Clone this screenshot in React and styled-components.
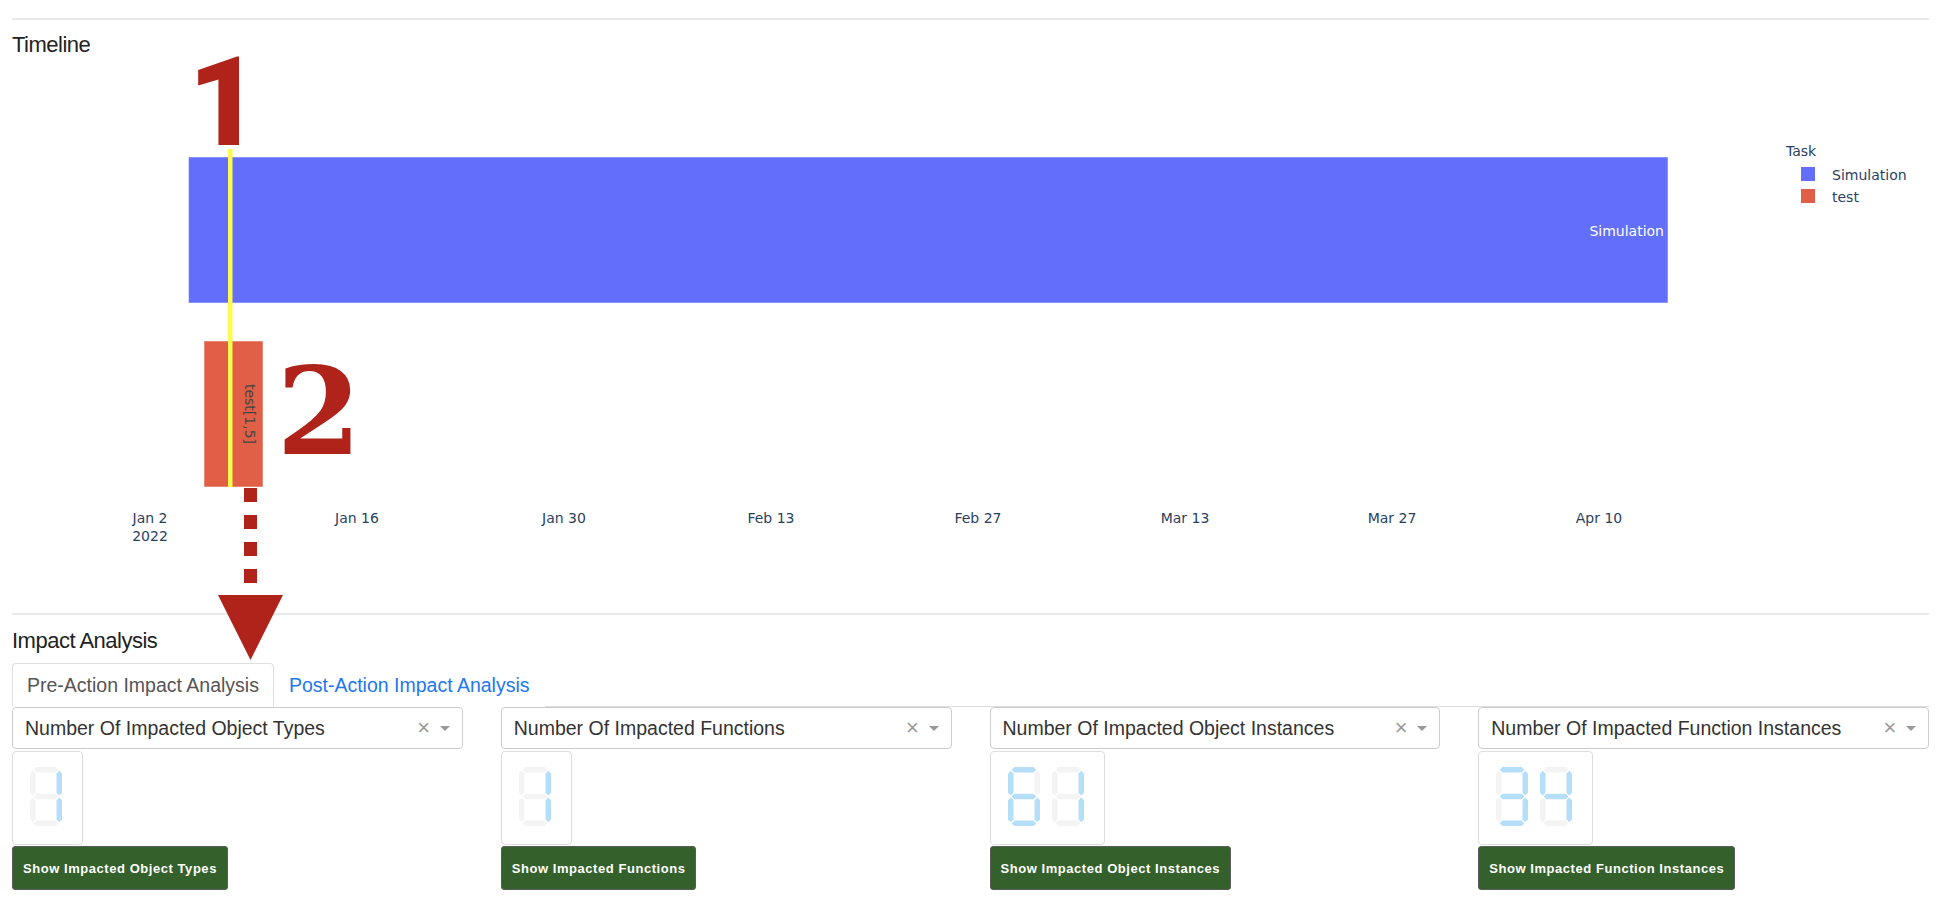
import React from 'react'
import styled, { createGlobalStyle } from 'styled-components'

const GlobalStyle = createGlobalStyle`
  html, body {
    margin: 0;
    padding: 0;
    background: #fff;
  }
  body {
    font-family: "Liberation Sans", Arial, sans-serif;
    color: #333;
  }
`

const metrics = [
  { label: 'Number Of Impacted Object Types', value: '1', button: 'Show Impacted Object Types' },
  { label: 'Number Of Impacted Functions', value: '1', button: 'Show Impacted Functions' },
  { label: 'Number Of Impacted Object Instances', value: '61', button: 'Show Impacted Object Instances' },
  { label: 'Number Of Impacted Function Instances', value: '34', button: 'Show Impacted Function Instances' },
]

const ticks = ['Jan 2', 'Jan 16', 'Jan 30', 'Feb 13', 'Feb 27', 'Mar 13', 'Mar 27', 'Apr 10']

// segments lit for each digit: a b c d e f g
const SEGMENTS = {
  0: 'abcdef', 1: 'bc', 2: 'abdeg', 3: 'abcdg', 4: 'bcfg',
  5: 'acdfg', 6: 'acdefg', 7: 'abc', 8: 'abcdefg', 9: 'abcdfg',
}

function App() {
  return (
    <Page>
      <GlobalStyle />
      <Divider />
      <SectionTitle>Timeline</SectionTitle>
      <TimelineChart />
      <Divider />
      <SectionTitle $gap={13}>Impact Analysis</SectionTitle>
      <TabBar>
        <Tab $active>Pre-Action Impact Analysis</Tab>
        <Tab>Post-Action Impact Analysis</Tab>
      </TabBar>
      <MetricGrid>
        {metrics.map(m => (
          <MetricColumn key={m.label}>
            <Select>
              <SelectValue>{m.label}</SelectValue>
              <SelectClear>×</SelectClear>
              <SelectArrow />
            </Select>
            <DigitBox>
              {m.value.split('').map((d, i) => <SevenSegment key={i} digit={d} />)}
            </DigitBox>
            <ActionButton>{m.button}</ActionButton>
          </MetricColumn>
        ))}
      </MetricGrid>
      <Annotations />
      <StepMark $left={188} $top={40}>1</StepMark>
    </Page>
  )
}

export default App

function TimelineChart() {
  return (
    <ChartSvg width="1942" height="555" viewBox="0 0 1942 555">
      <rect x="188.5" y="99" width="1479.5" height="146" fill="#636efa" stroke="rgba(255,255,255,0.5)" strokeWidth="1" />
      <rect x="204" y="283" width="59" height="146" fill="#e15f47" stroke="rgba(255,255,255,0.5)" strokeWidth="1" />
      <ChartText x="1664" y="178" textAnchor="end" fill="#fff">Simulation</ChartText>
      <ChartText
        x="249.5" y="356" textAnchor="middle" dominantBaseline="central"
        fill="#444" transform="rotate(90 249.5 356)"
      >
        test[1,5]
      </ChartText>
      {ticks.map((t, i) => (
        <ChartText key={t} x={150 + i * 207} y="465" textAnchor="middle">{t}</ChartText>
      ))}
      <ChartText x="150" y="483" textAnchor="middle">2022</ChartText>
      <ChartText x="1786" y="98">Task</ChartText>
      <rect x="1801" y="109" width="14" height="14" fill="#636efa" />
      <rect x="1801" y="131" width="14" height="14" fill="#e15f47" />
      <ChartText x="1832" y="122">Simulation</ChartText>
      <ChartText x="1832" y="144">test</ChartText>
    </ChartSvg>
  )
}

function Annotations() {
  return (
    <Overlay width="1942" height="700" viewBox="0 0 1942 700">
      <SerifMark x="319" y="454" textAnchor="middle">2</SerifMark>
      <rect x="228" y="149" width="4.5" height="338" fill="#fefb4c" />
      {[488, 515, 542, 569].map(y => (
        <rect key={y} x="244" y={y} width="13" height="14" fill="#b0231a" />
      ))}
      <polygon points="218,595 283,595 250.5,660" fill="#b0231a" />
    </Overlay>
  )
}

function SevenSegment({ digit }) {
  const W = 32, H = 59, T = 5.5, G = 0.9
  const on = SEGMENTS[digit] || ''
  const h = yc => {
    const xa = T / 2 + G, xb = W - T / 2 - G
    return `${xa},${yc} ${xa + T / 2},${yc - T / 2} ${xb - T / 2},${yc - T / 2} ${xb},${yc} ${xb - T / 2},${yc + T / 2} ${xa + T / 2},${yc + T / 2}`
  }
  const v = (xc, ya, yb) =>
    `${xc},${ya} ${xc + T / 2},${ya + T / 2} ${xc + T / 2},${yb - T / 2} ${xc},${yb} ${xc - T / 2},${yb - T / 2} ${xc - T / 2},${ya + T / 2}`
  const segs = {
    a: h(T / 2),
    b: v(W - T / 2, T / 2 + G, H / 2 - G),
    c: v(W - T / 2, H / 2 + G, H - T / 2 - G),
    d: h(H - T / 2),
    e: v(T / 2, H / 2 + G, H - T / 2 - G),
    f: v(T / 2, T / 2 + G, H / 2 - G),
    g: h(H / 2),
  }
  return (
    <svg width={W} height={H} viewBox={`0 0 ${W} ${H}`}>
      {Object.entries(segs).map(([k, p]) => (
        <polygon key={k} points={p} fill={on.includes(k) ? '#b5dff8' : '#f4f4f4'} />
      ))}
    </svg>
  )
}

const Page = styled.div`
  position: relative;
  padding: 18px 13px 10px 12px;
`
const Divider = styled.div`
  height: 2px;
  background: #e9e9e9;
`
const SectionTitle = styled.h2`
  margin: ${props => props.$gap || 12}px 0 0;
  font-family: "Liberation Sans", Arial, sans-serif;
  font-size: 22px;
  line-height: 26px;
  font-weight: 400;
  letter-spacing: -0.5px;
  color: #222;
`
const ChartSvg = styled.svg`
  display: block;
  margin-left: -12px;
`
const ChartText = styled.text`
  font-family: "DejaVu Sans", Verdana, sans-serif;
  font-size: 14px;
  fill: ${props => props.fill || '#2a3f5f'};
`
const Overlay = styled.svg`
  position: absolute;
  top: 0;
  left: 0;
  pointer-events: none;
`
const StepMark = styled.span`
  position: absolute;
  left: ${props => props.$left}px;
  top: ${props => props.$top}px;
  font-family: Roboto, "Open Sans", sans-serif;
  font-weight: 900;
  font-size: 125px;
  line-height: 125px;
  color: #b0231a;
  pointer-events: none;
`
const SerifMark = styled.text`
  font-family: "DejaVu Serif", serif;
  font-weight: 700;
  font-size: 122px;
  fill: #b0231a;
`
const TabBar = styled.div`
  display: flex;
  margin-top: 9px;
  height: 44px;
  box-sizing: border-box;
  border-bottom: 1px solid #dedede;
`
const Tab = styled.div`
  box-sizing: border-box;
  height: 44px;
  margin-bottom: -1px;
  padding: 0 14px;
  line-height: 42px;
  font-size: 19.5px;
  border: 1px solid ${props => (props.$active ? '#dedede' : 'transparent')};
  border-bottom-color: ${props => (props.$active ? '#fff' : 'transparent')};
  border-radius: 4px 4px 0 0;
  background: #fff;
  color: ${props => (props.$active ? '#555' : '#1e78f0')};
  cursor: pointer;
`
const MetricGrid = styled.div`
  display: grid;
  grid-template-columns: repeat(4, 1fr);
  column-gap: 38px;
`
const MetricColumn = styled.div`
  display: flex;
  flex-direction: column;
  align-items: flex-start;
`
const Select = styled.div`
  align-self: stretch;
  box-sizing: border-box;
  height: 42px;
  display: flex;
  align-items: center;
  padding: 0 10px 0 12px;
  border: 1px solid #ccc;
  border-radius: 4px;
  background: #fff;
`
const SelectValue = styled.div`
  flex: 1;
  font-size: 19.5px;
  color: #333;
  white-space: nowrap;
  overflow: hidden;
`
const SelectClear = styled.span`
  width: 20px;
  text-align: center;
  font-size: 22px;
  line-height: 1;
  color: #999;
  margin-right: 6px;
`
const SelectArrow = styled.span`
  width: 0;
  height: 0;
  border-style: solid;
  border-width: 5px 5px 0;
  border-color: #999 transparent transparent;
  margin-right: 2px;
`
const DigitBox = styled.div`
  display: flex;
  gap: 12px;
  box-sizing: border-box;
  height: 94px;
  margin-top: 2px;
  padding: 15px 20px 18px 17px;
  border: 1px solid #ddd;
  border-radius: 4px;
  background: #fff;
`
const ActionButton = styled.button`
  box-sizing: border-box;
  height: 44px;
  margin-top: 1px;
  padding: 0 10px;
  background: #34612b;
  border: 1px solid #5a5a5a;
  border-radius: 3px;
  color: #fff;
  font-family: "Liberation Sans", Arial, sans-serif;
  font-size: 13px;
  font-weight: 700;
  letter-spacing: 0.55px;
  cursor: pointer;
`
